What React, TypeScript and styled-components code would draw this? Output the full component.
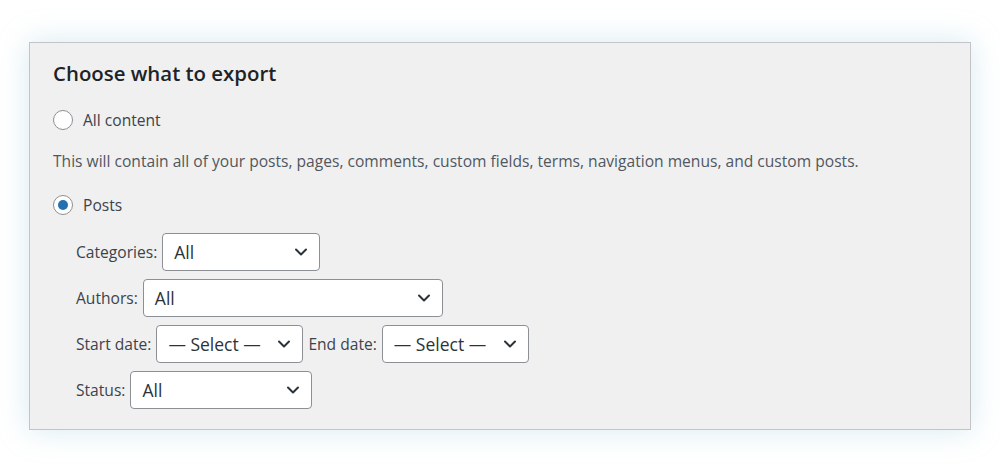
import React from 'react';
import styled, { createGlobalStyle } from 'styled-components';

const GlobalStyle = createGlobalStyle`
  html, body {
    margin: 0;
    padding: 0;
    background: #ffffff;
  }
  body {
    font-family: "Open Sans", "Noto Sans", sans-serif;
    color: #3c434a;
  }
`;

const Page = styled.div`
  padding: 42px 29px 0 29px;
  height: 475px;
  box-sizing: border-box;
`;

const Panel = styled.section`
  box-sizing: border-box;
  height: 388px;
  background: #f0f0f1;
  border: 1px solid #c3c4c7;
  box-shadow: 0 0 28px rgba(140, 195, 215, 0.35);
  padding: 16px 23px 0 23px;
  display: flex;
  flex-direction: column;
`;

const Title = styled.h2`
  margin: 0;
  font-size: 20.4px;
  font-weight: 600;
  line-height: 28px;
  color: #1d2327;
`;

const RadioRow = styled.label<{ $top: number }>`
  display: flex;
  align-items: center;
  gap: 10px;
  margin-top: ${(p) => p.$top}px;
  font-size: 15.6px;
  line-height: 24px;
  color: #3c434a;
`;

const RadioDot = styled.span<{ $checked?: boolean }>`
  box-sizing: border-box;
  width: 20px;
  height: 20px;
  border-radius: 50%;
  border: 1px solid #8c8f94;
  background: #ffffff;
  display: flex;
  align-items: center;
  justify-content: center;
  &::after {
    content: '';
    width: 10px;
    height: 10px;
    border-radius: 50%;
    background: ${(p) => (p.$checked ? '#2271b1' : 'transparent')};
  }
`;

const Description = styled.p`
  margin: 17px 0 0 0;
  font-size: 15.6px;
  line-height: 24px;
  color: #50575e;
`;

const Filters = styled.div`
  margin-top: 16px;
  padding-left: 23px;
  display: flex;
  flex-direction: column;
  gap: 8px;
`;

const FilterRow = styled.div`
  display: flex;
  align-items: center;
  gap: 5px;
  font-size: 15.6px;
  color: #3c434a;
`;

const Label = styled.span`
  line-height: 24px;
`;

const SelectBox = styled.div<{ $width: number }>`
  box-sizing: border-box;
  width: ${(p) => p.$width}px;
  height: 38px;
  background: #ffffff;
  border: 1px solid #8c8f94;
  border-radius: 4px;
  display: flex;
  align-items: center;
  justify-content: space-between;
  padding: 0 10px 0 11px;
  font-size: 17.5px;
  color: #2c3338;
`;

const Chevron = () => (
  <svg width="16" height="16" viewBox="0 0 16 16" fill="none">
    <path d="M3 5.5 L8 10.5 L13 5.5" stroke="#2c3338" strokeWidth="2" strokeLinecap="round" strokeLinejoin="round" />
  </svg>
);

const Select = ({ value, width }: { value: string; width: number }) => (
  <SelectBox $width={width}>
    <span>{value}</span>
    <Chevron />
  </SelectBox>
);

const App = () => {
  return (
    <>
      <GlobalStyle />
      <Page>
        <Panel>
          <Title>Choose what to export</Title>
          <RadioRow $top={21}>
            <RadioDot />
            All content
          </RadioRow>
          <Description>
            This will contain all of your posts, pages, comments, custom fields, terms, navigation menus, and custom posts.
          </Description>
          <RadioRow $top={20}>
            <RadioDot $checked />
            Posts
          </RadioRow>
          <Filters>
            <FilterRow>
              <Label>Categories:</Label>
              <Select value="All" width={158} />
            </FilterRow>
            <FilterRow>
              <Label>Authors:</Label>
              <Select value="All" width={300} />
            </FilterRow>
            <FilterRow>
              <Label>Start date:</Label>
              <Select value="— Select —" width={147} />
              <Label>End date:</Label>
              <Select value="— Select —" width={147} />
            </FilterRow>
            <FilterRow>
              <Label>Status:</Label>
              <Select value="All" width={182} />
            </FilterRow>
          </Filters>
        </Panel>
      </Page>
    </>
  );
};

export default App;
